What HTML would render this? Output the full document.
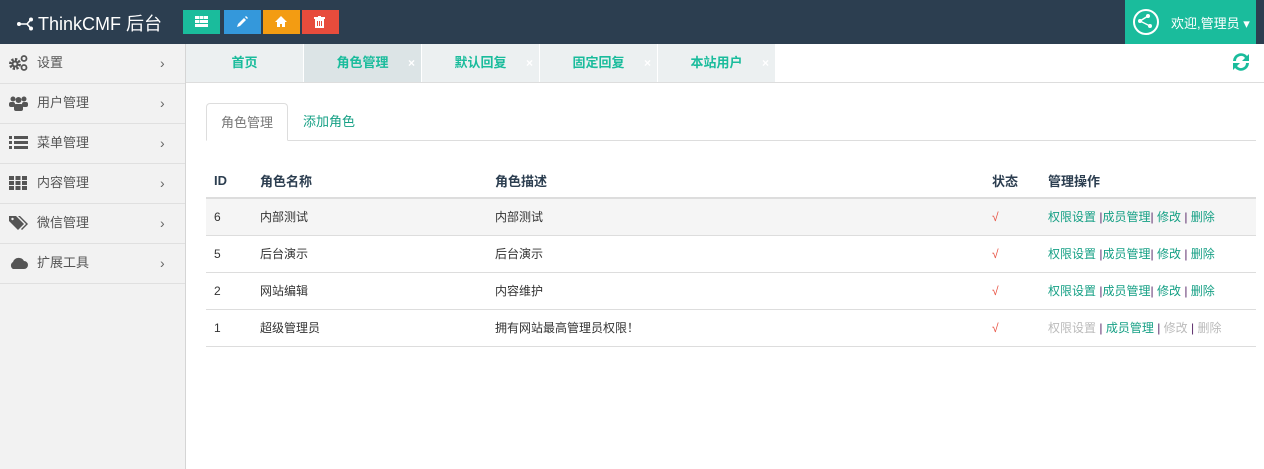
<!DOCTYPE html>
<html><head><meta charset="utf-8"><style>
*{margin:0;padding:0;box-sizing:border-box}
body{width:1264px;height:469px;overflow:hidden;font-family:"Liberation Sans","Noto Sans CJK SC",sans-serif;font-size:12px;color:#333;background:#fff;position:relative}
.top{position:absolute;left:0;top:0;width:1264px;height:44px;background:#2c3e50}
.logo{position:absolute;left:16px;top:10px;color:#fff;font-size:18px}
.btn{position:absolute;top:10px;width:37px;height:24px;line-height:0}
.btn svg{position:absolute;left:12px;top:6px}
.user{position:absolute;left:1125px;top:0;width:131px;height:44px;background:#1abc9c;color:#fff;font-size:13px}
.side{position:absolute;left:0;top:44px;width:186px;height:425px;background:#f2f2f2;border-right:1px solid #d5d5d5}
.si{height:40px;border-bottom:1px solid #e0e0e0;position:relative;font-size:13px;color:#555;line-height:38px;padding-left:37px}
.si .ic{position:absolute;left:9px;top:11px;width:19px;height:16px;display:block;line-height:0}
.si .ar{position:absolute;left:160px;top:0;color:#666;font-size:14px}
.tabs{position:absolute;left:186px;top:44px;width:1078px;height:39px;background:#fff;border-bottom:1px solid #ddd}
.tab{position:absolute;top:0;width:117px;height:38px;background:#ecf0f1;color:#1abc9c;font-size:13px;font-weight:bold;text-align:center;line-height:38px}
.tab .x{position:absolute;right:6px;top:0;color:#fff;font-size:12px}
.it{position:absolute;top:103px;height:38px;line-height:38px;font-size:13px}
table{position:absolute;left:206px;top:163px;width:1050px;border-collapse:collapse}
td,th{text-align:left;padding:0 8px;height:37px;font-size:12px}
th{font-size:13px;height:35px;border-bottom:2px solid #ddd;color:#2c3e50}
td{border-bottom:1px solid #ddd}
.g{color:#16a085}.l{color:#bbb}.p{color:#5a2a6a}.ck{color:#e74c3c}
</style></head><body>
<div class="top">
<div class="logo"><svg width="22" height="14" style="vertical-align:-1px" viewBox="0 0 22 14"><circle cx="3" cy="7" r="2" fill="#fff"/><circle cx="15" cy="2.5" r="2" fill="#fff"/><circle cx="15" cy="11.5" r="2" fill="#fff"/><path d="M3 7H11L15 2.5M11 7L15 11.5" stroke="#fff" stroke-width="1.6" fill="none"/></svg>ThinkCMF 后台</div>
<div class="btn" style="left:183px;background:#1abc9c"><svg width="13" height="11"><g fill="#fff"><rect x="0" y="0" width="4" height="3"/><rect x="4.5" y="0" width="4" height="3"/><rect x="9" y="0" width="4" height="3"/><rect x="0" y="4" width="4" height="3"/><rect x="4.5" y="4" width="8.5" height="3"/><rect x="0" y="8" width="13" height="3"/></g></svg></div>
<div class="btn" style="left:224px;background:#3498db"><svg width="12" height="12"><path d="M1 11L2 8L8 2L10 4L4 10Z" fill="#fff"/><path d="M9 1L10 0L12 2L11 3Z" fill="#fff"/></svg></div>
<div class="btn" style="left:263px;background:#f39c12"><svg width="12" height="11"><path d="M0 6L6 0L12 6H10V11H7V8H5V11H2V6Z" fill="#fff"/></svg></div>
<div class="btn" style="left:302px;background:#e74c3c"><svg width="11" height="12"><path d="M0 1H11V3H0ZM4 0H7V1H4ZM1 3H10V12H1ZM3 5V10H4V5ZM5 5V10H6V5ZM7 5V10H8V5Z" fill="#fff" fill-rule="evenodd"/></svg></div>
<div class="user"><svg style="position:absolute;left:7px;top:8px" width="28" height="28" viewBox="0 0 28 28"><circle cx="14" cy="14" r="12" stroke="#fff" stroke-width="2" fill="none"/><circle cx="8" cy="13" r="2" fill="#fff"/><circle cx="16" cy="8" r="2" fill="#fff"/><circle cx="18" cy="18" r="2" fill="#fff"/><path d="M8 13L16 8M8 13L18 18" stroke="#fff" stroke-width="1.4"/></svg><span style="position:absolute;left:46px;top:13px">欢迎,管理员 ▾</span></div>
</div>
<div class="side">
<div class="si"><span class="ic"><svg width="20" height="16"><circle cx="6" cy="9" r="4.5" fill="none" stroke="#555" stroke-width="3" stroke-dasharray="2.2 1.3"/><circle cx="6" cy="9" r="3.5" fill="#555"/><circle cx="6" cy="9" r="1.5" fill="#f2f2f2"/><circle cx="15" cy="3.5" r="2.5" fill="none" stroke="#555" stroke-width="1.8"/><circle cx="15" cy="12.5" r="2.5" fill="none" stroke="#555" stroke-width="1.8"/></svg></span>设置<span class="ar">›</span></div>
<div class="si"><span class="ic"><svg width="19" height="16"><circle cx="4" cy="4" r="2.5" fill="#555"/><circle cx="15" cy="4" r="2.5" fill="#555"/><circle cx="9.5" cy="5" r="3" fill="#555"/><rect x="5" y="9" width="9" height="7" rx="2" fill="#555"/><rect x="0" y="7" width="6" height="5" rx="2" fill="#555"/><rect x="13" y="7" width="6" height="5" rx="2" fill="#555"/></svg></span>用户管理<span class="ar">›</span></div>
<div class="si"><span class="ic"><svg width="19" height="16"><g fill="#555"><rect x="0" y="1" width="3" height="3"/><rect x="5" y="1" width="14" height="3"/><rect x="0" y="6" width="3" height="3"/><rect x="5" y="6" width="14" height="3"/><rect x="0" y="11" width="3" height="3"/><rect x="5" y="11" width="14" height="3"/></g></svg></span>菜单管理<span class="ar">›</span></div>
<div class="si"><span class="ic"><svg width="19" height="16"><g fill="#555"><rect x="0" y="1" width="5" height="4"/><rect x="6.5" y="1" width="5" height="4"/><rect x="13" y="1" width="5" height="4"/><rect x="0" y="6" width="5" height="4"/><rect x="6.5" y="6" width="5" height="4"/><rect x="13" y="6" width="5" height="4"/><rect x="0" y="11" width="5" height="4"/><rect x="6.5" y="11" width="5" height="4"/><rect x="13" y="11" width="5" height="4"/></g></svg></span>内容管理<span class="ar">›</span></div>
<div class="si"><span class="ic"><svg width="19" height="16"><path d="M0 1H7L15 9L9 15L0 6Z" fill="#555"/><path d="M9 1H11L19 9L13 15L12 14L17 9Z" fill="#555"/><circle cx="3.5" cy="4" r="1.2" fill="#f2f2f2"/></svg></span>微信管理<span class="ar">›</span></div>
<div class="si"><span class="ic"><svg width="19" height="16"><path d="M4 14A4 4 0 0 1 4 7A6 6 0 0 1 15 6A4 4 0 0 1 15 14Z" fill="#555"/></svg></span>扩展工具<span class="ar">›</span></div>
</div>
<div class="tabs">
<div class="tab" style="left:0">首页</div>
<div class="tab" style="left:118px;background:#dce4e6">角色管理<span class="x">×</span></div>
<div class="tab" style="left:236px">默认回复<span class="x">×</span></div>
<div class="tab" style="left:354px">固定回复<span class="x">×</span></div>
<div class="tab" style="left:472px">本站用户<span class="x">×</span></div>
<svg style="position:absolute;left:1044px;top:7px" width="22" height="22" viewBox="0 0 22 22"><path d="M3 10A8 8 0 0 1 17 5L19 3V10H12L15 7A5 5 0 0 0 6 10Z" fill="#1abc9c"/><path d="M19 12A8 8 0 0 1 5 17L3 19V12H10L7 15A5 5 0 0 0 16 12Z" fill="#1abc9c"/></svg>
</div>
<div style="position:absolute;left:206px;top:140px;width:1050px;border-top:1px solid #ddd"></div>
<div class="it" style="left:206px;width:82px;border:1px solid #ddd;border-bottom:1px solid #fff;border-radius:4px 4px 0 0;background:#fff;color:#777;text-align:center">角色管理</div>
<div class="it" style="left:303px;color:#16a085">添加角色</div>
<table>
<tr><th style="width:46px">ID</th><th style="width:235px">角色名称</th><th style="width:497px">角色描述</th><th style="width:56px">状态</th><th>管理操作</th></tr>
<tr style="background:#f5f5f5"><td>6</td><td>内部测试</td><td>内部测试</td><td class="ck">√</td><td><span class="g">权限设置</span> <span class="p">|</span><span class="g">成员管理</span><span class="p">|</span> <span class="g">修改</span> <span class="p">|</span> <span class="g">删除</span></td></tr>
<tr><td>5</td><td>后台演示</td><td>后台演示</td><td class="ck">√</td><td><span class="g">权限设置</span> <span class="p">|</span><span class="g">成员管理</span><span class="p">|</span> <span class="g">修改</span> <span class="p">|</span> <span class="g">删除</span></td></tr>
<tr><td>2</td><td>网站编辑</td><td>内容维护</td><td class="ck">√</td><td><span class="g">权限设置</span> <span class="p">|</span><span class="g">成员管理</span><span class="p">|</span> <span class="g">修改</span> <span class="p">|</span> <span class="g">删除</span></td></tr>
<tr><td>1</td><td>超级管理员</td><td>拥有网站最高管理员权限！</td><td class="ck">√</td><td><span class="l">权限设置</span> <span class="p">|</span> <span class="g">成员管理</span> <span class="p">|</span> <span class="l">修改</span> <span class="p">|</span> <span class="l">删除</span></td></tr>
</table>
</body></html>
